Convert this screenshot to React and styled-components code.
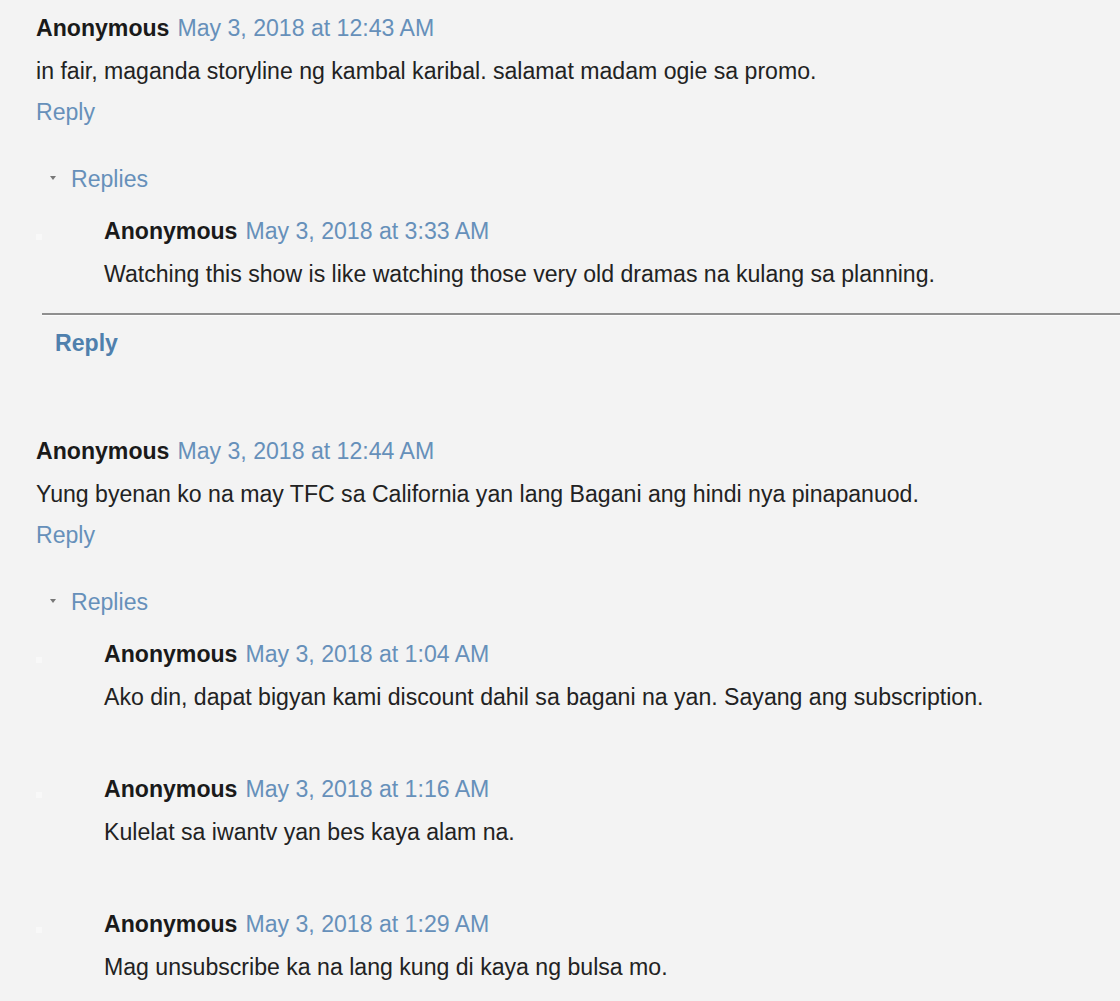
import React from 'react';
import styled, { createGlobalStyle } from 'styled-components';

const GlobalStyle = createGlobalStyle`
  html, body {
    margin: 0;
    padding: 0;
    background: #f3f3f3;
  }
  body {
    font-family: "Liberation Sans", Arial, sans-serif;
    font-size: 23.1px;
    line-height: 30px;
    color: #222;
  }
`;

const Page = styled.div`
  padding: 13px 0 40px 36px;
  overflow: hidden;
`;

const Thread = styled.div`
  margin-bottom: 78px;
`;

const Header = styled.div`
  white-space: nowrap;
`;

const Author = styled.span`
  font-weight: bold;
  color: #1a1a1a;
`;

const Stamp = styled.a`
  color: #6690ba;
  text-decoration: none;
  margin-left: 8px;
`;

const Body = styled.div`
  margin-top: 13px;
  white-space: nowrap;
`;

const ReplyLink = styled.a`
  display: block;
  margin-top: 11px;
  color: #6690ba;
  text-decoration: none;
`;

const Toggle = styled.div`
  display: flex;
  align-items: center;
  margin: 37px 0 0 14px;
  color: #6690ba;
`;

const Arrow = styled.span`
  width: 0;
  height: 0;
  border-left: 3px solid transparent;
  border-right: 3px solid transparent;
  border-top: 4px solid #777;
  margin-right: 15px;
  margin-top: -2px;
`;

const ReplyList = styled.div`
  margin-top: 22px;
  display: flex;
  flex-direction: column;
  gap: 62px;
`;

const Nested = styled.div`
  display: flex;
`;

const Avatar = styled.div`
  width: 6px;
  height: 6px;
  margin-top: 18px;
  margin-right: 62px;
  background: #f8f8f8;
`;

const NestedContent = styled.div``;

const Divider = styled.div`
  margin: 24px 0 0 6px;
  border-top: 2px solid #8f8f8f;
  border-bottom: 1px solid #fcfcfc;
`;

const BoldReply = styled.a`
  display: block;
  margin: 12px 0 0 19px;
  font-weight: bold;
  color: #4f80ad;
  text-decoration: none;
`;

const threads = [
  {
    time: 'May 3, 2018 at 12:43 AM',
    text: 'in fair, maganda storyline ng kambal karibal. salamat madam ogie sa promo.',
    replies: [
      {
        time: 'May 3, 2018 at 3:33 AM',
        text: 'Watching this show is like watching those very old dramas na kulang sa planning.',
      },
    ],
    closed: true,
  },
  {
    time: 'May 3, 2018 at 12:44 AM',
    text: 'Yung byenan ko na may TFC sa California yan lang Bagani ang hindi nya pinapanuod.',
    replies: [
      {
        time: 'May 3, 2018 at 1:04 AM',
        text: 'Ako din, dapat bigyan kami discount dahil sa bagani na yan. Sayang ang subscription.',
      },
      { time: 'May 3, 2018 at 1:16 AM', text: 'Kulelat sa iwantv yan bes kaya alam na.' },
      { time: 'May 3, 2018 at 1:29 AM', text: 'Mag unsubscribe ka na lang kung di kaya ng bulsa mo.' },
    ],
  },
];

const App = () => (
  <>
    <GlobalStyle />
    <Page>
      {threads.map((t) => (
        <Thread key={t.time}>
          <Header>
            <Author>Anonymous</Author>
            <Stamp href="#">{t.time}</Stamp>
          </Header>
          <Body>{t.text}</Body>
          <ReplyLink href="#">Reply</ReplyLink>
          <Toggle>
            <Arrow />
            Replies
          </Toggle>
          <ReplyList>
            {t.replies.map((r) => (
              <Nested key={r.time}>
                <Avatar />
                <NestedContent>
                  <Header>
                    <Author>Anonymous</Author>
                    <Stamp href="#">{r.time}</Stamp>
                  </Header>
                  <Body>{r.text}</Body>
                </NestedContent>
              </Nested>
            ))}
          </ReplyList>
          {t.closed && (
            <>
              <Divider />
              <BoldReply href="#">Reply</BoldReply>
            </>
          )}
        </Thread>
      ))}
    </Page>
  </>
);

export default App;
